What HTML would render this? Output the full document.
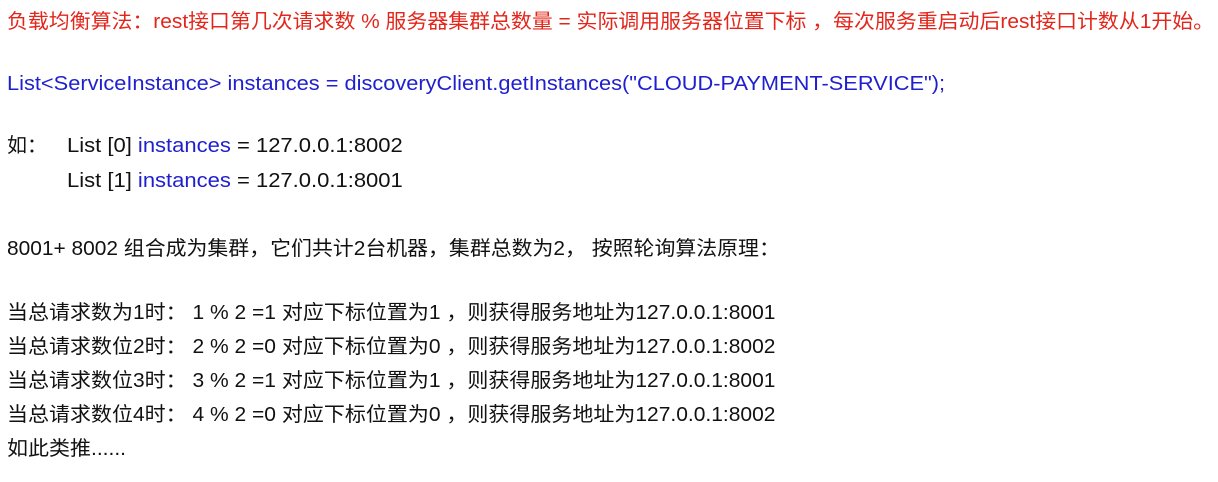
<!DOCTYPE html>
<html><head><meta charset="utf-8"><style>
body{margin:0;width:1218px;height:482px;background:#fff;overflow:hidden;font-family:"Liberation Sans","Noto Sans CJK SC",sans-serif;font-size:20px;color:#111;}
.l{position:absolute;white-space:pre;line-height:22px;transform-origin:0 50%;}
.r{color:#e3261b}
.b{color:#1f1fd0}
</style></head><body>
<div class="l r" style="left:7px;top:11px;transform:scaleX(1.045)">负载均衡算法：rest接口第几次请求数 % 服务器集群总数量 = 实际调用服务器位置下标 ，每次服务重启动后rest接口计数从1开始。</div>
<div class="l b" style="left:7px;top:73px;transform:scaleX(1.09)">List&lt;ServiceInstance&gt; instances = discoveryClient.getInstances("CLOUD-PAYMENT-SERVICE");</div>
<div class="l" style="left:7px;top:135px">如：</div>
<div class="l" style="left:67px;top:135px;transform:scaleX(1.1)">List [0] <span class="b">instances</span> = 127.0.0.1:8002</div>
<div class="l" style="left:67px;top:170px;transform:scaleX(1.1)">List [1] <span class="b">instances</span> = 127.0.0.1:8001</div>
<div class="l" style="left:7px;top:238px;transform:scaleX(1.045)">8001+ 8002 组合成为集群，它们共计2台机器，集群总数为2， 按照轮询算法原理：</div>
<div class="l" style="left:7px;top:302px;transform:scaleX(1.05)">当总请求数为1时： 1 % 2 =1 对应下标位置为1 ，则获得服务地址为127.0.0.1:8001</div>
<div class="l" style="left:7px;top:336px;transform:scaleX(1.05)">当总请求数位2时： 2 % 2 =0 对应下标位置为0 ，则获得服务地址为127.0.0.1:8002</div>
<div class="l" style="left:7px;top:370px;transform:scaleX(1.05)">当总请求数位3时： 3 % 2 =1 对应下标位置为1 ，则获得服务地址为127.0.0.1:8001</div>
<div class="l" style="left:7px;top:404px;transform:scaleX(1.05)">当总请求数位4时： 4 % 2 =0 对应下标位置为0 ，则获得服务地址为127.0.0.1:8002</div>
<div class="l" style="left:7px;top:438px;transform:scaleX(1.05)">如此类推......</div>
</body></html>
